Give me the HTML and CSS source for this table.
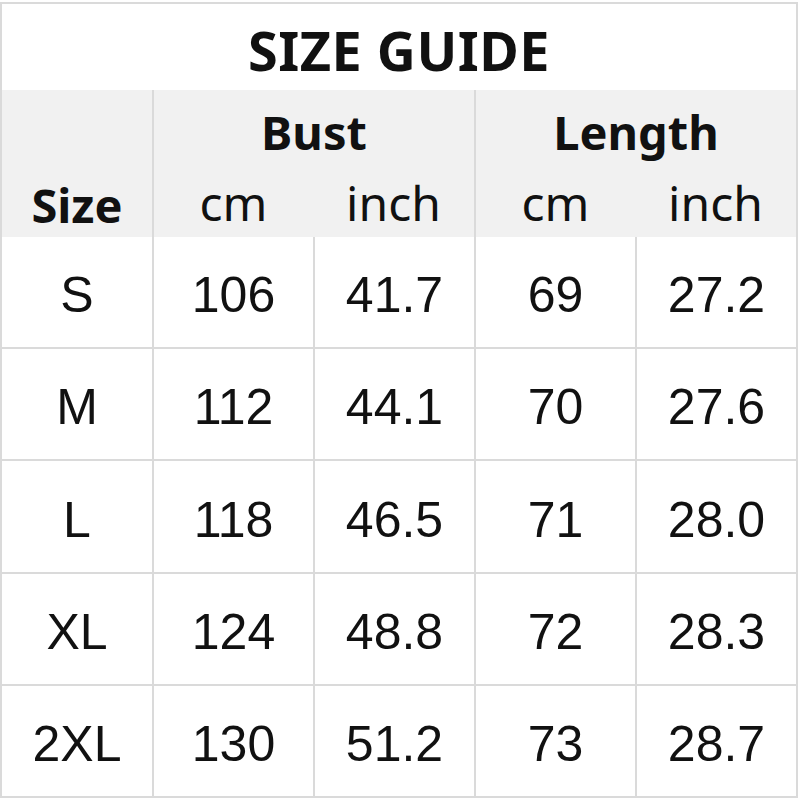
FILE: index.html
```html
<!DOCTYPE html>
<html>
<head>
<meta charset="utf-8">
<link rel="stylesheet" href="styles.css">
</head>
<body>
<div class="chart">
  <div class="title">SIZE GUIDE</div>
  <div class="head">
    <div class="h-size">Size</div>
    <div class="group">
      <div class="g-name">Bust</div>
      <div class="units"><span>cm</span><span>inch</span></div>
    </div>
    <div class="group">
      <div class="g-name">Length</div>
      <div class="units"><span>cm</span><span>inch</span></div>
    </div>
  </div>
  <div class="body">
    <div class="row"><div>S</div><div>106</div><div>41.7</div><div>69</div><div>27.2</div></div>
    <div class="row"><div>M</div><div>112</div><div>44.1</div><div>70</div><div>27.6</div></div>
    <div class="row"><div>L</div><div>118</div><div>46.5</div><div>71</div><div>28.0</div></div>
    <div class="row"><div>XL</div><div>124</div><div>48.8</div><div>72</div><div>28.3</div></div>
    <div class="row"><div>2XL</div><div>130</div><div>51.2</div><div>73</div><div>28.7</div></div>
  </div>
</div>
</body>
</html>
```
FILE: styles.css
```css
html, body {
  margin: 0;
  padding: 0;
  background: #ffffff;
}
.chart {
  margin-top: 2px;
  width: 798px;
  height: 796px;
  box-sizing: border-box;
  border: 2px solid #dadada;
  display: flex;
  flex-direction: column;
  color: #111;
}
.title {
  height: 86px;
  display: flex;
  align-items: center;
  justify-content: center;
  padding-top: 6px;
  box-sizing: border-box;
  font-family: "Noto Sans", sans-serif;
  font-weight: 700;
  font-size: 54px;
  letter-spacing: 0.5px;
}
.head {
  height: 147px;
  background: #f1f1f1;
  display: grid;
  grid-template-columns: 150px 322px 322px;
  font-family: "Noto Sans", sans-serif;
}
.h-size {
  display: flex;
  align-items: flex-end;
  justify-content: center;
  padding-bottom: 2px;
  font-weight: 700;
  font-size: 47px;
  line-height: 64px;
}
.group {
  border-left: 2px solid #dadada;
  display: flex;
  flex-direction: column;
}
.g-name {
  height: 80px;
  display: flex;
  align-items: center;
  justify-content: center;
  padding-top: 4px;
  box-sizing: border-box;
  font-weight: 700;
  font-size: 47px;
}
.units {
  flex: 1;
  display: grid;
  grid-template-columns: 159px 161px;
  align-items: center;
  font-size: 48px;
}
.units span {
  text-align: center;
  padding-bottom: 4px;
}
.body {
  flex: 1;
  display: flex;
  flex-direction: column;
  font-family: "Liberation Sans", Arial, sans-serif;
  font-size: 50px;
}
.row {
  flex: 1;
  display: grid;
  grid-template-columns: 150px 161px 161px 161px 161px;
  border-top: 2px solid #dadada;
}
.row:first-child {
  border-top: none;
}
.row > div {
  display: flex;
  align-items: center;
  justify-content: center;
  padding-top: 6px;
}
.row > div + div {
  border-left: 2px solid #dadada;
}
```
